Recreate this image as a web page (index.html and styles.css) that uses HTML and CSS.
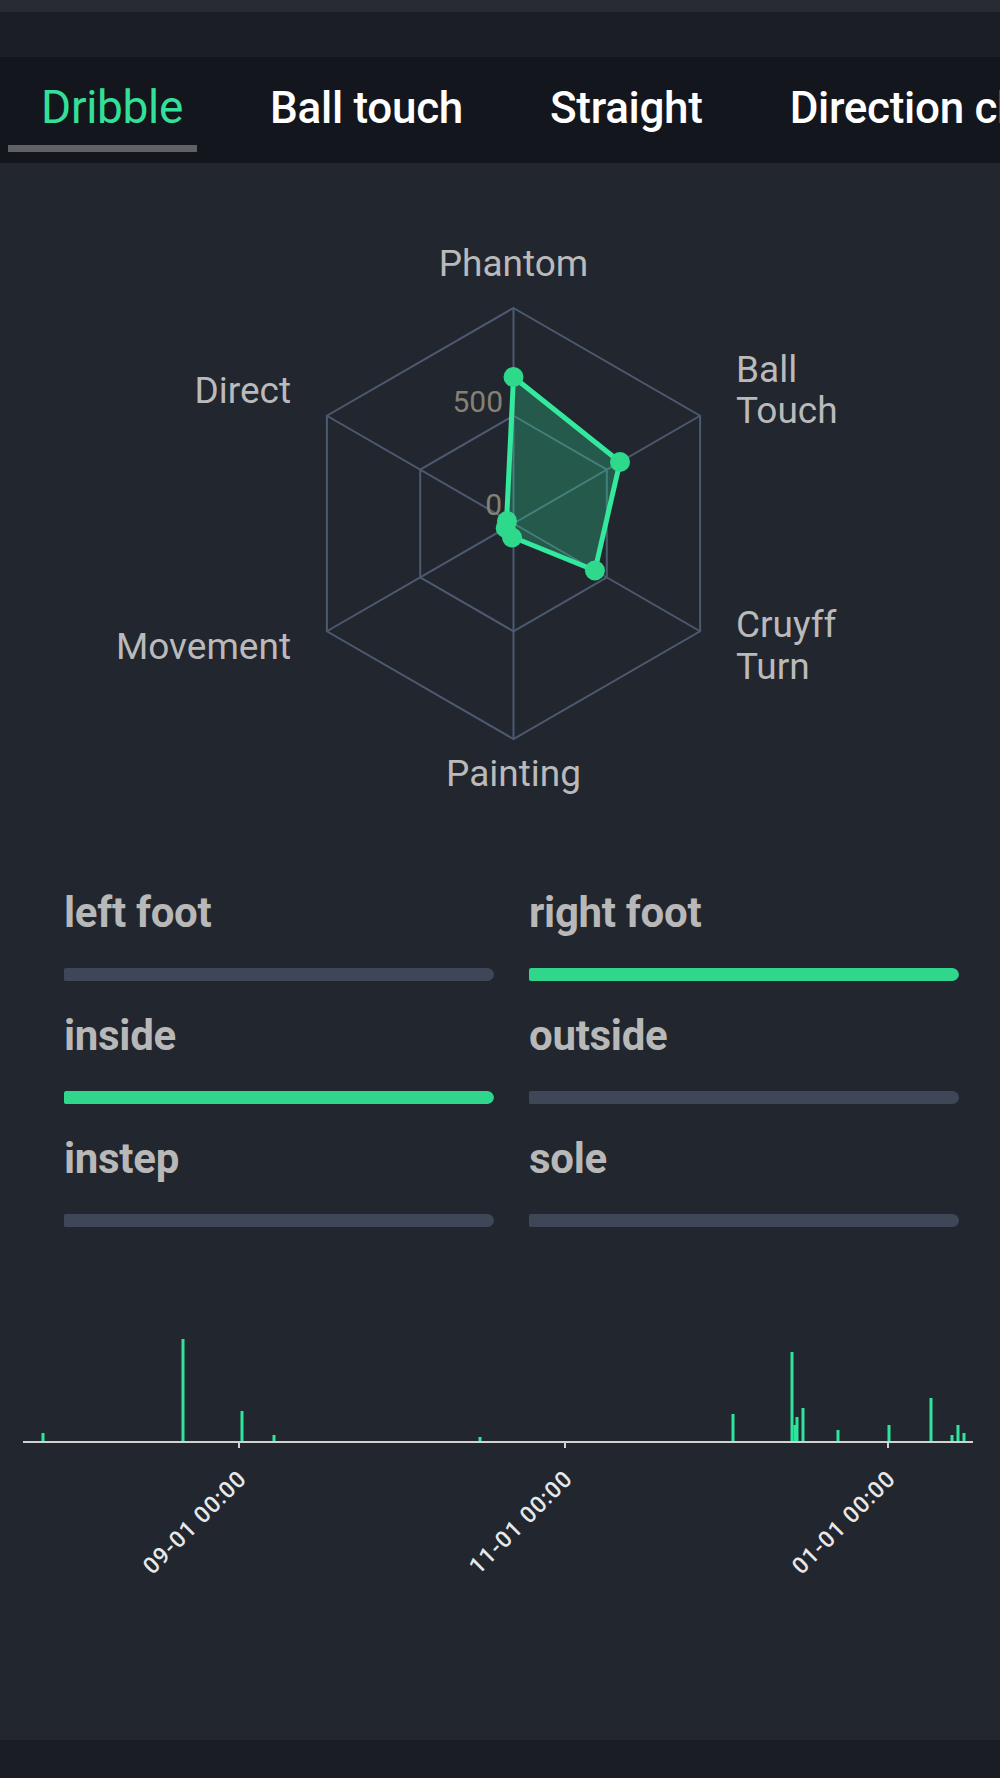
FILE: index.html
```html
<!DOCTYPE html>
<html lang="en">
<head>
<meta charset="utf-8">
<title>Dribble stats</title>
<link rel="stylesheet" href="styles.css">
</head>
<body>
<div class="page">
  <div class="topbar"></div>
  <nav class="tabs">
    <span class="tab active">Dribble</span>
    <span class="tab">Ball touch</span>
    <span class="tab">Straight</span>
    <span class="tab">Direction change</span>
    <span class="indicator"></span>
  </nav>

  <svg class="radar" viewBox="0 163 1000 726" width="1000" height="726">
    <g class="grid">
      <polygon points="513.5,308 700.1,415.75 700.1,631.25 513.5,739 326.9,631.25 326.9,415.75"/>
      <polygon points="513.5,415.75 606.8,469.6 606.8,577.4 513.5,631.25 420.2,577.4 420.2,469.6"/>
      <line x1="513.5" y1="523.5" x2="513.5" y2="308"/>
      <line x1="513.5" y1="523.5" x2="700.1" y2="415.75"/>
      <line x1="513.5" y1="523.5" x2="700.1" y2="631.25"/>
      <line x1="513.5" y1="523.5" x2="513.5" y2="739"/>
      <line x1="513.5" y1="523.5" x2="326.9" y2="631.25"/>
      <line x1="513.5" y1="523.5" x2="326.9" y2="415.75"/>
    </g>
    <text class="tick-label" x="503" y="412">500</text>
    <text class="tick-label" x="502" y="515">0</text>
    <polygon class="area" points="513.5,377 620,462 594.9,570.5 513.5,537.5 505.7,528 506.6,519.5"/>
    <g class="dots">
      <circle cx="513.5" cy="377" r="10"/>
      <circle cx="620" cy="462" r="10"/>
      <circle cx="594.9" cy="570.5" r="10"/>
      <circle cx="512" cy="537.5" r="10"/>
      <circle cx="505.7" cy="528" r="10"/>
      <circle cx="507" cy="521" r="10"/>
    </g>
    <g class="axis-label">
      <text x="513.5" y="276" text-anchor="middle">Phantom</text>
      <text x="736" y="382">Ball</text>
      <text x="736" y="423">Touch</text>
      <text x="736" y="637">Cruyff</text>
      <text x="736" y="679">Turn</text>
      <text x="513.5" y="786" text-anchor="middle">Painting</text>
      <text x="291" y="659" text-anchor="end">Movement</text>
      <text x="291" y="402.5" text-anchor="end">Direct</text>
    </g>
  </svg>

  <section class="stats">
    <div class="stat">
      <div class="stat-label">left foot</div>
      <div class="track"><div class="fill" style="width:0%"></div></div>
    </div>
    <div class="stat">
      <div class="stat-label">right foot</div>
      <div class="track"><div class="fill" style="width:100%"></div></div>
    </div>
    <div class="stat">
      <div class="stat-label">inside</div>
      <div class="track"><div class="fill" style="width:100%"></div></div>
    </div>
    <div class="stat">
      <div class="stat-label">outside</div>
      <div class="track"><div class="fill" style="width:0%"></div></div>
    </div>
    <div class="stat">
      <div class="stat-label">instep</div>
      <div class="track"><div class="fill" style="width:0%"></div></div>
    </div>
    <div class="stat">
      <div class="stat-label">sole</div>
      <div class="track"><div class="fill" style="width:0%"></div></div>
    </div>
  </section>

  <svg class="timeline" viewBox="0 1227 1000 513" width="1000" height="513">
    <g class="spikes">
      <line x1="43" y1="1442" x2="43" y2="1433"/>
      <line x1="183" y1="1442" x2="183" y2="1339"/>
      <line x1="242" y1="1442" x2="242" y2="1411"/>
      <line x1="274" y1="1442" x2="274" y2="1435"/>
      <line x1="480" y1="1442" x2="480" y2="1437"/>
      <line x1="733" y1="1442" x2="733" y2="1414"/>
      <line x1="792" y1="1442" x2="792" y2="1352"/>
      <line x1="795" y1="1442" x2="795" y2="1425"/>
      <line x1="797" y1="1442" x2="797" y2="1417"/>
      <line x1="803" y1="1442" x2="803" y2="1408"/>
      <line x1="838" y1="1442" x2="838" y2="1430"/>
      <line x1="889" y1="1442" x2="889" y2="1425"/>
      <line x1="931" y1="1442" x2="931" y2="1398"/>
      <line x1="952" y1="1442" x2="952" y2="1435"/>
      <line x1="958" y1="1442" x2="958" y2="1425"/>
      <line x1="964" y1="1442" x2="964" y2="1433"/>
    </g>
    <g class="axis">
      <line x1="23" y1="1442" x2="973" y2="1442"/>
      <line x1="239" y1="1442" x2="239" y2="1448"/>
      <line x1="565" y1="1442" x2="565" y2="1448"/>
      <line x1="888" y1="1442" x2="888" y2="1448"/>
    </g>
    <g class="date-label">
      <text x="248" y="1480" text-anchor="end" transform="rotate(-45 248 1480)">09-01 00:00</text>
      <text x="574" y="1480" text-anchor="end" transform="rotate(-45 574 1480)">11-01 00:00</text>
      <text x="897" y="1480" text-anchor="end" transform="rotate(-45 897 1480)">01-01 00:00</text>
    </g>
  </svg>

  <div class="bottombar"></div>
</div>
</body>
</html>
```

FILE: styles.css
```css
* { box-sizing: border-box; }

html, body {
  margin: 0;
  padding: 0;
  background: #22262f;
}

body {
  font-family: Roboto, "Noto Sans", "Liberation Sans", sans-serif;
}

.page {
  width: 1000px;
  min-height: 1778px;
  display: flex;
  flex-direction: column;
  background: #22262f;
  overflow: hidden;
}

.topbar {
  height: 57px;
  border-top: 12px solid #272b33;
  background: #1b1e25;
}

.tabs {
  position: relative;
  height: 106px;
  background: #13161c;
  display: flex;
  align-items: baseline;
  gap: 87px;
  padding: 24px 0 0 41px;
  white-space: nowrap;
  overflow: hidden;
}

.tab {
  font-size: 44px;
  line-height: 52px;
  font-weight: 500;
  color: #ffffff;
  letter-spacing: -0.3px;
  flex: none;
}

.tab.active {
  font-size: 46px;
  color: #33e09a;
  font-weight: 400;
}

.indicator {
  position: absolute;
  left: 8px;
  top: 88px;
  width: 189px;
  height: 7px;
  background: #606166;
}

.radar {
  display: block;
  flex: none;
}

.grid polygon,
.grid line {
  fill: none;
  stroke: #4c5a70;
  stroke-width: 2;
}

.tick-label {
  font-family: Roboto, "Noto Sans", sans-serif;
  font-size: 30px;
  fill: #858272;
  text-anchor: end;
}

.area {
  fill: rgba(46, 229, 157, 0.27);
  stroke: #34e89e;
  stroke-width: 5;
  stroke-linejoin: round;
}

.dots circle {
  fill: #2fd98c;
}

.axis-label text {
  font-family: Roboto, "Noto Sans", sans-serif;
  font-size: 37px;
  fill: #bababa;
}

.stats {
  display: grid;
  grid-template-columns: 430px 430px;
  column-gap: 35px;
  row-gap: 31px;
  padding: 0 41px 0 64px;
  flex: none;
}

.stat {
  display: flex;
  flex-direction: column;
}

.stat-label {
  font-size: 42px;
  line-height: 48px;
  font-weight: 700;
  color: #b8b8b8;
  letter-spacing: -0.3px;
  margin-bottom: 31px;
}

.track {
  height: 13px;
  background: #3f4658;
  border-radius: 2px 7px 7px 2px;
  overflow: hidden;
}

.fill {
  height: 100%;
  background: #2fd68c;
  border-radius: 2px 7px 7px 2px;
}

.timeline {
  display: block;
  flex: none;
}

.spikes line {
  stroke: #2ee59d;
  stroke-width: 3;
}

.axis line {
  stroke: #d2d2d2;
  stroke-width: 2;
}

.date-label text {
  font-family: Roboto, "Noto Sans", sans-serif;
  font-size: 23px;
  font-weight: 500;
  letter-spacing: 1px;
  fill: #e8e8e8;
}

.bottombar {
  height: 38px;
  background: #1a1d24;
  flex: none;
}
```
